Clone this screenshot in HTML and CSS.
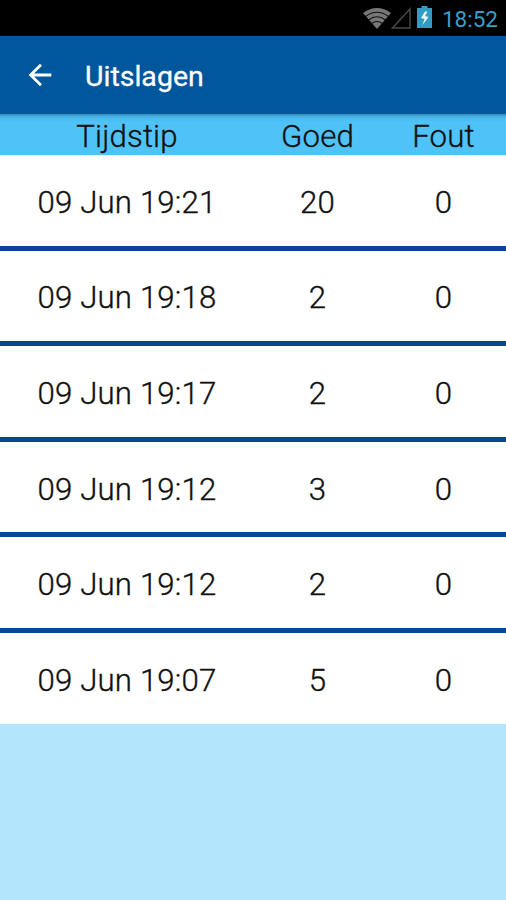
FILE: index.html
```html
<!DOCTYPE html>
<html lang="nl">
<head>
<meta charset="utf-8">
<title>Uitslagen</title>
<link rel="stylesheet" href="styles.css">
</head>
<body>
<div class="status">
<svg class="wifi" viewBox="0 0 28 21"><path fill="#777" d="M0 5Q14-5 28 5L14 21Z"/><path fill="none" stroke="#111" stroke-width="1.100" d="M2.500 8.500Q14 0 25.500 8.500M5.500 12Q14 5.500 22.500 12M8.500 15.500Q14 11.500 19.500 15.500"/></svg>
<svg class="signal" viewBox="0 0 20 22"><path fill="none" stroke="#484848" stroke-width="1.500" d="M1.500 21L19 2V21Z"/></svg>
<svg class="battery" viewBox="0 0 15 22"><path fill="#329cc5" d="M4.500 0h6v2H15v20H0V2h4.500z"/><path fill="#e8f6fb" d="M8 5.500L4 12l3.500 1-2 6 6-8-3.500-1 2.500-4.500z"/></svg>
<span class="clock">18:52</span>
</div>
<header class="bar">
<svg class="back" viewBox="0 0 24 24"><path fill="#fff" d="M20 11H7.830l5.590-5.590L12 4l-8 8 8 8 1.410-1.410L7.830 13H20v-2z"/></svg>
<h1>Uitslagen</h1>
</header>
<div class="row head"><span>Tijdstip</span><span>Goed</span><span>Fout</span></div>
<main class="table">
<div class="row"><span>09 Jun 19:21</span><span>20</span><span>0</span></div>
<div class="row"><span>09 Jun 19:18</span><span>2</span><span>0</span></div>
<div class="row"><span>09 Jun 19:17</span><span>2</span><span>0</span></div>
<div class="row"><span>09 Jun 19:12</span><span>3</span><span>0</span></div>
<div class="row"><span>09 Jun 19:12</span><span>2</span><span>0</span></div>
<div class="row"><span>09 Jun 19:07</span><span>5</span><span>0</span></div>
</main>
</body>
</html>
```
FILE: styles.css
```css
body{margin:0;height:900px;background:#b3e5fc;font-family:Roboto,sans-serif;color:#111;overflow:hidden}
.status{height:36px;background:#000;display:flex;align-items:center;justify-content:flex-end;padding-right:8px;box-sizing:border-box}
.wifi{width:28px;height:21px}
.signal{width:20px;height:22px}
.battery{width:15px;height:22px;margin:0 10px 2px 6px}
.clock{color:#359fc9;font-size:22.500px;line-height:34px;padding-top:1px}
.bar{height:78px;background:#01579b;display:flex;align-items:center;box-sizing:border-box;padding-left:23px;border-bottom:1px solid #07568f}
.back{width:34px;height:34px}
h1{margin:4px 0 0 28px;color:#fff;font-size:28.500px;font-weight:400;-webkit-text-stroke:.3px #fff}
.row{display:grid;grid-template-columns:254px 1fr 1fr;height:90.600px;box-sizing:border-box;padding-top:4px;align-items:center;text-align:center;background:#fff;font-size:31.200px;font-weight:300;letter-spacing:.15px;-webkit-text-stroke:.35px #111}
.row span+span{padding-left:1px}
.table{display:grid;gap:5px;background:#0a4495}
.head{height:41px;background:linear-gradient(#3487b8,#48b5e9 3px,#4fc3f7 8px)}
```
